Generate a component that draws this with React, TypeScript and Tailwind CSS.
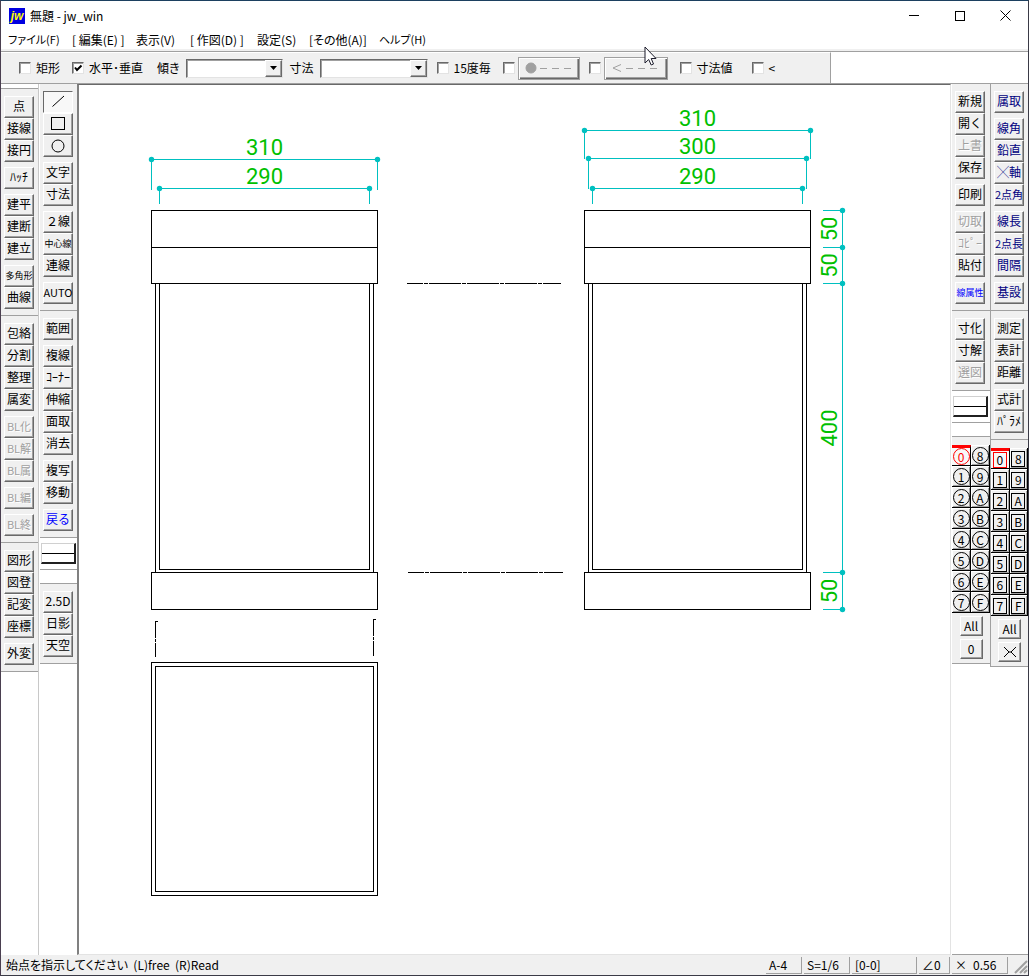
import React, { useState } from 'react';
import clsx from 'clsx';

type Tool = {
  label: string;
  tone?: 'blue' | 'navy' | 'off';
  size?: 'small' | 'medium';
  icon?: 'line' | 'rect' | 'circle';
};

const t = (...labels: string[]): Tool[] => labels.map((label) => ({ label }));
const off = (...labels: string[]): Tool[] => labels.map((label) => ({ label, tone: 'off' }));
const offBlock = (...labels: string[]): Tool[] => labels.map((label) => ({ label, tone: 'off', size: 'medium' }));
const navy = (...labels: string[]): Tool[] => labels.map((label) => ({ label, tone: 'navy' }));

// Each bar is a list of panels, each panel a list of button runs
const leftOuter: Tool[][][] = [
  [t('点', '接線', '接円'), t('ﾊｯﾁ'), t('建平', '建断', '建立'), [{ label: '多角形', size: 'small' }, { label: '曲線' }]],
  [t('包絡', '分割', '整理', '属変'), offBlock('BL化', 'BL解', 'BL属'), offBlock('BL編'), offBlock('BL終')],
  [t('図形', '図登', '記変', '座標'), t('外変')],
];

const leftInner: Tool[][][] = [
  [
    [{ label: '線', icon: 'line' }, { label: '矩形', icon: 'rect' }, { label: '円', icon: 'circle' }],
    t('文字', '寸法'),
    [{ label: '２線' }, { label: '中心線', size: 'small' }, { label: '連線' }],
    [{ label: 'AUTO', size: 'medium' }],
  ],
  [t('範囲'), t('複線', 'ｺｰﾅｰ', '伸縮', '面取', '消去'), t('複写', '移動'), [{ label: '戻る', tone: 'blue' }]],
  [t('2.5D', '日影', '天空')],
];

const rightInner: Tool[][][] = [
  [
    [...t('新規', '開く'), ...off('上書'), ...t('保存')],
    t('印刷'),
    [...off('切取', 'ｺﾋﾟｰ'), ...t('貼付')],
    [{ label: '線属性', tone: 'blue', size: 'small' }],
  ],
  [[...t('寸化', '寸解'), ...off('選図')]],
];

const rightOuter: Tool[][][] = [
  [
    navy('属取'),
    [...navy('線角', '鉛直', '╳軸'), { label: '2点角', tone: 'navy', size: 'medium' }],
    [...navy('線長'), { label: '2点長', tone: 'navy', size: 'medium' }, ...navy('間隔')],
    navy('基設'),
  ],
  [t('測定', '表計', '距離'), t('式計', 'ﾊﾟﾗﾒ')],
];

const layers = ['0', '8', '1', '9', '2', 'A', '3', 'B', '4', 'C', '5', 'D', '6', 'E', '7', 'F'];

const menus = [
  { label: 'ファイル(F)', className: 'w-16 text-[11px]' },
  { label: '[ 編集(E) ]', className: 'w-16' },
  { label: '表示(V)', className: 'w-[54px]' },
  { label: '[ 作図(D) ]', className: 'w-[67px]' },
  { label: '設定(S)', className: 'w-[52px]' },
  { label: '[その他(A)]', className: 'w-[70px]' },
  { label: 'ヘルプ(H)', className: 'w-16 text-[11px]' },
];

const raised = 'border border-t-white border-l-white border-r-[#696969] border-b-[#696969] bg-[#f0f0f0] shadow-[inset_-1px_-1px_0_#a0a0a0]';

const ToolIcon = ({ icon }: { icon: Tool['icon'] }) => (
  <svg width="20" height="18" viewBox="0 0 20 18" fill="none" stroke="#000" aria-hidden="true">
    {icon === 'line' && <path d="M4.5 14.5 L16 4" />}
    {icon === 'rect' && <rect x="3.5" y="3.5" width="13" height="12" shapeRendering="crispEdges" />}
    {icon === 'circle' && <circle cx="10" cy="10" r="6" />}
  </svg>
);

const ToolButton = ({ tool, pressed, onClick }: { tool: Tool; pressed: boolean; onClick: () => void }) => (
  <button
    type="button"
    disabled={tool.tone === 'off'}
    aria-label={tool.icon ? tool.label : undefined}
    onClick={onClick}
    className={clsx(
      'flex h-[22px] w-[30px] items-center justify-center pb-[2px] whitespace-nowrap leading-none',
      !tool.size && 'text-[12px]',
      tool.size === 'medium' && 'text-[11px]',
      tool.size === 'small' && 'text-[9px]',
      pressed
        ? 'border border-t-[#696969] border-l-[#696969] border-r-white border-b-white bg-[#f8f8f8]'
        : raised,
      tool.tone === 'blue' && 'text-[#0000ff]',
      tool.tone === 'navy' && 'text-[#000080]',
      tool.tone === 'off' && 'text-[#a0a0a0] [text-shadow:1px_1px_0_#fff]',
    )}
  >
    {tool.icon ? <ToolIcon icon={tool.icon} /> : tool.label}
  </button>
);

const Panel = ({ runs, active, onSelect }: { runs: Tool[][]; active: string; onSelect: (id: string) => void }) => (
  <div className="flex flex-col gap-[5px] border-b border-[#a0a0a0] bg-[#f0f0f0] pt-[7px] pb-[6px] pl-[3px]">
    {runs.map((run) => (
      <div key={run[0].label}>
        {run.map((tool) => (
          <ToolButton
            key={tool.label}
            tool={tool}
            pressed={!!tool.icon && active === tool.label}
            onClick={() => onSelect(tool.label)}
          />
        ))}
      </div>
    ))}
  </div>
);

const LineStyle = () => (
  <>
    <div className="border-b border-[#a0a0a0] bg-white py-[5px] pl-px">
      <button
        type="button"
        aria-label="線属性"
        className="flex h-[21px] w-[35px] items-center border-r-2 border-b-2 border-l border-t border-t-[#d0d0d0] border-l-[#d0d0d0] border-r-[#202020] border-b-[#202020] bg-white"
      >
        <span className="h-px w-full bg-black" />
      </button>
    </div>
    <div className="h-[14px] border-b border-[#a0a0a0] bg-white" />
  </>
);

const LayerPanel = ({ round, last }: { round?: boolean; last: string }) => {
  const [current, setCurrent] = useState('0');

  return (
    <div className="flex flex-col items-center border-b border-[#a0a0a0] bg-[#f0f0f0] pt-2 pb-1">
      <div className="grid w-full grid-cols-2">
        {layers.map((layer) => (
          <button
            key={layer}
            type="button"
            onClick={() => setCurrent(layer)}
            className={clsx(
              'flex h-[21px] items-center justify-center border-r border-b border-r-black border-b-black text-[12px] leading-none',
              current === layer
                ? 'border-t-[3px] border-t-[#ff0000] bg-[#f8f8f8]'
                : 'bg-[#f0f0f0] pt-px shadow-[inset_1px_1px_0_#fff,inset_-1px_-1px_0_#a0a0a0]',
            )}
          >
            <span
              className={clsx(
                'flex items-center justify-center border',
                round ? 'h-[17px] w-[17px] rounded-full' : 'h-4 w-[14px]',
                current === layer ? 'border-[#ff0000]' : 'border-black',
                current === layer && round && 'text-[#ff0000]',
              )}
            >
              {layer}
            </span>
          </button>
        ))}
      </div>
      <button type="button" className={clsx('mt-[3px] h-5 w-[23px] text-[12px] leading-none', raised)}>All</button>
      <button
        type="button"
        aria-label={last === 'x' ? '交差' : undefined}
        className={clsx('mt-[3px] flex h-5 w-[23px] items-center justify-center text-[12px] leading-none', raised)}
      >
        {last === 'x' ? (
          <svg width="14" height="12" viewBox="0 0 14 12" fill="none" stroke="#000" aria-hidden="true">
            <path d="M1 1 L6 6 L1 11 M13 1 L8 6 L13 11 M6 6 H8" />
          </svg>
        ) : (
          last
        )}
      </button>
    </div>
  );
};

const CheckBox = ({ label, name, checked, className }: { label?: string; name?: string; checked?: boolean; className?: string }) => (
  <label className={clsx('flex items-center gap-[5px] whitespace-nowrap', className)}>
    <span className="relative flex">
      <input
        type="checkbox"
        aria-label={name}
        defaultChecked={checked}
        className="peer h-3 w-3 appearance-none border border-t-[#696969] border-l-[#696969] border-r-[#e3e3e3] border-b-[#e3e3e3] bg-white shadow-[inset_1px_1px_0_#a0a0a0]"
      />
      <svg width="12" height="12" viewBox="0 0 12 12" className="pointer-events-none absolute inset-0 hidden peer-checked:block" aria-hidden="true">
        <path d="M3 5.5 L5 8 L9.5 3.5" fill="none" stroke="#000" strokeWidth="2" />
      </svg>
    </span>
    {label}
  </label>
);

const Combo = ({ label, className }: { label: string; className: string }) => (
  <label className="flex items-center gap-[6px] whitespace-nowrap">
    {label}
    <span className={clsx('relative flex h-[19px]', className)}>
      <select className="w-full appearance-none border border-t-[#696969] border-l-[#696969] border-r-[#e3e3e3] border-b-[#e3e3e3] bg-white px-1 text-[12px] leading-none shadow-[inset_1px_1px_0_#a0a0a0]">
        <option></option>
      </select>
      <span className={clsx('pointer-events-none absolute top-px right-px flex h-[17px] w-[17px] items-center justify-center', raised)}>
        <svg width="7" height="4" viewBox="0 0 7 4" aria-hidden="true">
          <path d="M0 0 H7 L3.5 4 Z" />
        </svg>
      </span>
    </span>
  </label>
);

const raisedOff = 'flex h-[23px] items-center border border-[#a0a0a0] bg-[#f0f0f0] shadow-[inset_1px_1px_0_#fff,inset_-1px_-1px_0_#696969,inset_-2px_-2px_0_#a0a0a0]';

const ControlBar = () => (
  <div className="flex h-[33px] border-t border-b border-t-[#a0a0a0] border-b-[#a0a0a0] bg-white">
    <form className="flex w-[830px] shrink-0 items-center border-t border-r border-t-white border-r-[#a0a0a0] bg-[#f0f0f0] pl-[18px] text-[12px] leading-none [font-feature-settings:'palt']">
      <CheckBox label="矩形" className="w-[53px]" />
      <CheckBox label="水平･垂直" checked className="w-[85px]" />
      <Combo label="傾き" className="w-[97px]" />
      <span className="w-[7px]" />
      <Combo label="寸法" className="w-[108px]" />
      <CheckBox label="15度毎" className="ml-[9px] w-[66px]" />
      <CheckBox name="端点円" className="w-[15px]" />
      <button type="button" disabled aria-label="端点円の種類" className={clsx('w-[62px]', raisedOff)}>
        <svg width="60" height="19" viewBox="0 0 60 19" stroke="#a0a0a0" fill="#a0a0a0" aria-hidden="true">
          <circle cx="12" cy="9" r="5" />
          <path d="M21 9.5 H28 M33 9.5 H40 M45 9.5 H52" shapeRendering="crispEdges" />
        </svg>
      </button>
      <CheckBox name="端点矢印" className="ml-[9px] w-[15px]" />
      <button type="button" disabled aria-label="端点矢印の種類" className={clsx('w-16', raisedOff)}>
        <svg width="62" height="19" viewBox="0 0 62 19" stroke="#a0a0a0" fill="none" aria-hidden="true">
          <path d="M16 5.5 L8 9 L16 12.5" />
          <path d="M21 9.5 H28 M33 9.5 H40 M45 9.5 H52" shapeRendering="crispEdges" />
        </svg>
      </button>
      <CheckBox label="寸法値" className="ml-3 w-[72px]" />
      <CheckBox label="<" />
    </form>
  </div>
);

// Dimension line with its end dots and extension lines
const Dimension = ({ x1, x2, y, drop, value }: { x1: number; x2: number; y: number; drop: number; value: string }) => (
  <g>
    <path d={`M${x1} ${y} H${x2} M${x1} ${y} v${drop} M${x2} ${y} v${drop}`} stroke="#00c0c0" shapeRendering="crispEdges" />
    <circle cx={x1} cy={y} r="2.7" fill="#00c0c0" stroke="none" />
    <circle cx={x2} cy={y} r="2.7" fill="#00c0c0" stroke="none" />
    <text x={(x1 + x2) / 2} y={y - 5} textAnchor="middle" fill="#00c000" stroke="none">{value}</text>
  </g>
);

const levels = [210, 247, 283, 572, 609];
const heights = ['50', '50', '400', '50'];

const Elevation = ({ x }: { x: number }) => (
  <g shapeRendering="crispEdges">
    <path d={`M${x} 210 h226 v73 h-226 Z M${x} 247 h226`} />
    <path d={`M${x + 4} 283 V572 M${x + 222} 283 V572 M${x + 8} 283 V569 h210 V283`} />
    <path d={`M${x} 572 h226 v37 h-226 Z`} />
  </g>
);

const Drawing = () => (
  <svg className="h-full w-full font-['Roboto',sans-serif] text-[22px]" role="img" aria-label="図面">
    <g transform="translate(-78.5 -84.5)" fill="none" stroke="#000">
      <Elevation x={151} />
      <Elevation x={584} />
      <g shapeRendering="crispEdges">
        <path d="M151 662 h226 v233 h-226 Z M155 666 h218 v225 h-218 Z" />
        <path d="M406 283 H560 M407 572 H562" strokeDasharray="32 1 4 1" strokeDashoffset="16" />
        <path d="M157 621 h-2 V656 M375 619 h-2 V655" strokeDasharray="18 1 3 1" />
      </g>
      <Dimension x1={151} x2={377} y={159} drop={30} value="310" />
      <Dimension x1={159} x2={369} y={188} drop={15} value="290" />
      <Dimension x1={584} x2={810} y={130} drop={28} value="310" />
      <Dimension x1={588} x2={806} y={158} drop={30} value="300" />
      <Dimension x1={592} x2={802} y={188} drop={15} value="290" />
      <path d="M842 210 V609" stroke="#00c0c0" shapeRendering="crispEdges" />
      {levels.map((y) => (
        <g key={y}>
          <path d={`M822 ${y} H842`} stroke="#00c0c0" shapeRendering="crispEdges" />
          <circle cx="842" cy={y} r="2.7" fill="#00c0c0" stroke="none" />
        </g>
      ))}
      {heights.map((value, i) => (
        <text
          key={i}
          transform={`translate(836 ${(levels[i] + levels[i + 1]) / 2}) rotate(-90)`}
          textAnchor="middle"
          fill="#00c000"
          stroke="none"
        >
          {value}
        </text>
      ))}
    </g>
  </svg>
);

const App = () => {
  const [active, setActive] = useState('線');

  return (
    <div className="relative flex min-h-screen flex-col border border-t-[#1c4060] border-r-[#3a3a46] border-b-[#3a3a46] border-l-[#4a3f50] bg-white font-['Noto_Sans_CJK_JP',sans-serif] text-[12px] leading-none text-black">
      {/* Title bar */}
      <header className="flex h-[29px] items-center pl-2">
        <span className="flex h-4 w-4 items-center justify-center bg-[#0000e0] font-['Liberation_Sans',sans-serif] text-[12px] font-bold text-[#ffff00] italic">jw</span>
        <h1 className="ml-[5px] flex-1">無題 - jw_win</h1>
        <button type="button" aria-label="最小化" className="flex h-full w-[46px] items-center justify-center">
          <span className="h-px w-[10px] bg-black" />
        </button>
        <button type="button" aria-label="最大化" className="flex h-full w-[45px] items-center justify-center">
          <span className="h-[10px] w-[10px] border border-black" />
        </button>
        <button type="button" aria-label="閉じる" className="flex h-full w-[46px] items-center justify-center">
          <svg width="11" height="11" viewBox="0 0 11 11" stroke="#000" aria-hidden="true">
            <path d="M0.5 0.5 L10.5 10.5 M10.5 0.5 L0.5 10.5" />
          </svg>
        </button>
      </header>

      {/* Menu bar */}
      <nav className="flex h-[21px] items-center border-b-2 border-[#f0f0f0] pl-[7px] [font-feature-settings:'palt']">
        {menus.map((menu) => (
          <button key={menu.label} type="button" className={clsx('text-left whitespace-nowrap', menu.className)}>
            {menu.label}
          </button>
        ))}
      </nav>

      <ControlBar />

      <div className="flex flex-1">
        <aside className="w-[38px] border-r border-[#c8c8c8]">
          <div className="h-[5px] border-b border-[#a0a0a0]" />
          {leftOuter.map((runs, i) => (
            <Panel key={i} runs={runs} active={active} onSelect={setActive} />
          ))}
        </aside>
        <aside className="w-[38px] border-l border-white">
          <Panel runs={leftInner[0]} active={active} onSelect={setActive} />
          <Panel runs={leftInner[1]} active={active} onSelect={setActive} />
          <LineStyle />
          <Panel runs={leftInner[2]} active={active} onSelect={setActive} />
        </aside>

        <main className="min-w-0 flex-1 border-t border-r border-b border-l-2 border-t-[#696969] border-r-[#e3e3e3] border-b-[#e3e3e3] border-l-[#808080]">
          <Drawing />
        </main>

        <aside className="ml-px w-[38px] border-b border-b-[#a0a0a0]">
          {rightInner.map((runs, i) => (
            <Panel key={i} runs={runs} active={active} onSelect={setActive} />
          ))}
          <LineStyle />
          <LayerPanel round last="0" />
        </aside>
        <aside className="w-[38px] border-b border-b-[#a0a0a0]">
          <div className="border-l border-[#a0a0a0]">
            {rightOuter.map((runs, i) => (
              <Panel key={i} runs={runs} active={active} onSelect={setActive} />
            ))}
            <LayerPanel last="x" />
          </div>
        </aside>
      </div>

      {/* Status bar */}
      <footer className="flex h-5 items-center gap-[2px] bg-[#f0f0f0] pl-[5px] [font-feature-settings:'palt']">
        <p className="flex-1 whitespace-pre">始点を指示してください  (L)free  (R)Read</p>
        <span className="flex h-[17px] w-[36px] items-center border-r border-b border-[#a0a0a0] pl-[3px]">A-4</span>
        <span className="flex h-[17px] w-[46px] items-center border-r border-b border-[#a0a0a0] pl-[3px]">S=1/6</span>
        <span className="flex h-[17px] w-[65px] items-center border-r border-b border-[#a0a0a0] pl-[3px]">[0-0]</span>
        <span className="flex h-[17px] w-[31px] items-center border-r border-b border-[#a0a0a0] pl-[3px]">∠0</span>
        <span className="flex h-[17px] w-[56px] items-center gap-[6px] border-r border-b border-[#a0a0a0] pl-[3px]">
          <span>×</span>
          <span>0.56</span>
        </span>
        <svg width="18" height="17" viewBox="0 0 18 17" stroke="#a0a0a0" strokeWidth="2" aria-hidden="true">
          <path d="M5 16 L17 4 M10 16 L17 9 M14 16 L17 13" />
        </svg>
      </footer>

      {/* Mouse pointer */}
      <svg className="pointer-events-none absolute top-[45px] left-[643px]" width="13" height="20" viewBox="0 0 13 20" aria-hidden="true">
        <path d="M1 1 V17 L4.7 13.5 L7.2 19 L9.5 18 L7.2 12.5 H12 Z" fill="#fff" stroke="#1a1a2a" />
      </svg>
    </div>
  );
};

export default App;
